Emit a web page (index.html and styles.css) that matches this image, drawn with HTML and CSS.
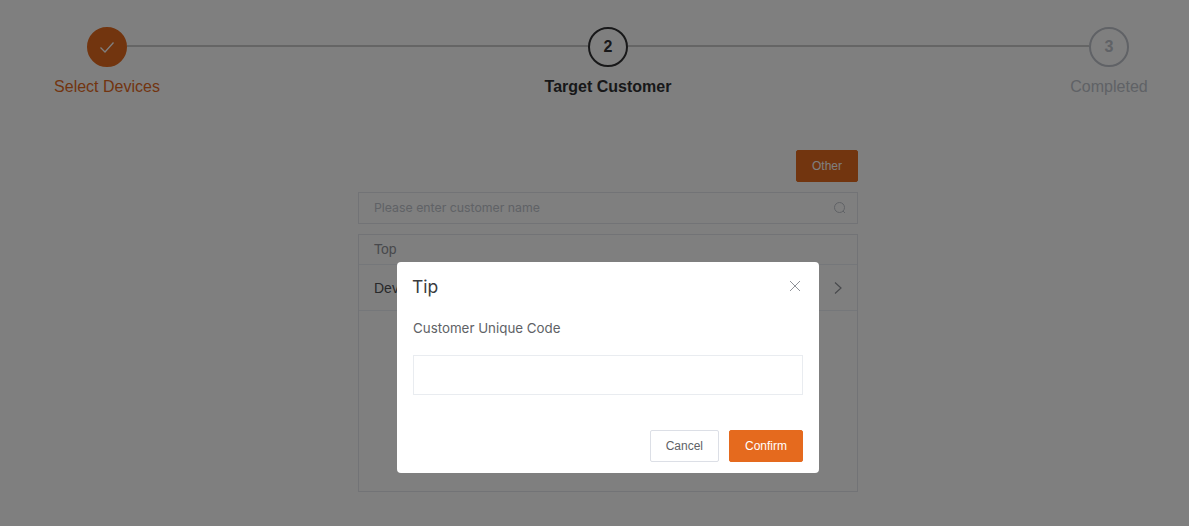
FILE: index.html
```html
<!DOCTYPE html>
<html lang="en">
<head>
<meta charset="utf-8">
<title>Target Customer</title>
<link rel="stylesheet" href="styles.css">
</head>
<body>
<main class="page">
  <section class="stepper">
    <div class="step step-done">
      <div class="step-circle">
        <svg class="check" viewBox="0 0 16 16" width="16" height="16"><path d="M1.5 8.5 L6 13 L14.5 3.5" fill="none" stroke="currentColor" stroke-width="1.3"/></svg>
      </div>
      <div class="step-label">Select Devices</div>
    </div>
    <div class="step-line"></div>
    <div class="step step-active">
      <div class="step-circle">2</div>
      <div class="step-label">Target Customer</div>
    </div>
    <div class="step-line"></div>
    <div class="step step-todo">
      <div class="step-circle">3</div>
      <div class="step-label">Completed</div>
    </div>
  </section>
  <section class="content">
    <div class="toolbar"><button class="btn btn-primary btn-other">Other</button></div>
    <div class="search">
      <span class="search-text">Please enter customer name</span>
      <svg class="search-icon" viewBox="0 0 14 14" width="14" height="14"><circle cx="6.5" cy="6.5" r="5" fill="none" stroke="currentColor"/><path d="M10 10 L12 12" stroke="currentColor"/></svg>
    </div>
    <div class="list">
      <div class="list-head">Top</div>
      <div class="list-row">
        <span>Device</span>
        <svg class="chevron" viewBox="0 0 10 14" width="10" height="14"><path d="M2 1.5 L8 7 L2 12.5" fill="none" stroke="currentColor" stroke-width="1.2"/></svg>
      </div>
    </div>
  </section>
</main>
<div class="overlay">
  <div class="dialog">
    <header class="dialog-head">
      <span class="dialog-title">Tip</span>
      <svg class="close" viewBox="0 0 12 12" width="12" height="12"><path d="M1 1 L11 11 M11 1 L1 11" fill="none" stroke="currentColor"/></svg>
    </header>
    <p class="dialog-label">Customer Unique Code</p>
    <input class="dialog-input" type="text">
    <footer class="dialog-foot">
      <button class="btn btn-plain">Cancel</button>
      <button class="btn btn-primary">Confirm</button>
    </footer>
  </div>
</div>
</body>
</html>
```
FILE: styles.css
```css
* { box-sizing: border-box; }
html, body { margin: 0; height: 100%; }
body { background: #fff; font-family: "Liberation Sans", Arial, sans-serif; overflow: hidden; }
.page { padding: 27px 20px 0 47px; }
.stepper { display: flex; align-items: flex-start; }
.step { width: 120px; flex: none; display: flex; flex-direction: column; align-items: center; position: relative; z-index: 1; }
.step-circle { width: 40px; height: 40px; border-radius: 50%; border: 2px solid; display: flex; align-items: center; justify-content: center; font-size: 16px; font-weight: 700; background: #fff; }
.step-label { margin-top: 9px; font-size: 16px; line-height: 22px; white-space: nowrap; }
.step-done .step-circle { background: #e56a1e; border-color: #e56a1e; color: #fff; }
.step-done .step-label { color: #e56a1e; }
.step-active .step-circle { border-color: #303133; color: #303133; }
.step-active .step-label { color: #303133; font-weight: 700; }
.step-todo .step-circle { border-color: #c0c4cc; color: #c0c4cc; }
.step-todo .step-label { color: #c0c4cc; }
.step-line { flex: 1; height: 2px; margin: 18px -40px 0; background: #cbcbcb; }
.content { width: 500px; margin: 52px auto 0; }
.toolbar { display: flex; justify-content: flex-end; margin-bottom: 10px; }
.btn { height: 32px; border-radius: 2px; font-family: "Liberation Sans", Arial, sans-serif; font-size: 12px; border: 1px solid; padding: 0 15px; }
.btn-primary { background: #e56a1e; border-color: #e56a1e; color: #fff; }
.btn-plain { background: #fff; border-color: #dcdfe6; color: #606266; }
.btn-other { width: 62px; padding: 0; }
.search { height: 32px; border: 1px solid #e4e7ed; display: flex; align-items: center; justify-content: space-between; padding: 0 10px 0 15px; font-family: Inter, sans-serif; font-size: 12.3px; color: #c0c4cc; }
.search-text { position: relative; top: -1px; }
.list { margin-top: 10px; height: 258px; border: 1px solid #e4e7ed; }
.list-head { height: 30px; padding-left: 15px; line-height: 29px; font-size: 14px; color: #909399; border-bottom: 1px solid #ebeef5; }
.list-row { height: 46px; display: flex; align-items: center; justify-content: space-between; padding: 0 14px 0 15px; font-size: 14px; color: #505256; border-bottom: 1px solid #ebeef5; }
.chevron { color: #909399; }
.overlay { position: fixed; inset: 0; background: rgba(0,0,0,.5); z-index: 5; }
.dialog { position: absolute; left: 397px; top: 262px; width: 422px; height: 211px; background: #fff; border-radius: 4px; padding: 0 16px; font-family: Inter, sans-serif; display: flex; flex-direction: column; }
.dialog-head { height: 48px; display: flex; align-items: center; justify-content: space-between; }
.dialog-title { font-size: 17.5px; color: #3a3b3e; margin-left: -1px; }
.close { color: #909399; margin-right: 2px; }
.dialog-label { margin: 8px 0 0; font-size: 13.35px; line-height: 20px; color: #606266; }
.dialog-input { margin-top: 17px; height: 40px; width: 100%; border: 1px solid #e9ecf0; outline: none; background: #fff; flex: none; }
.dialog-foot { margin-top: 35px; display: flex; justify-content: flex-end; gap: 10px; }
```
